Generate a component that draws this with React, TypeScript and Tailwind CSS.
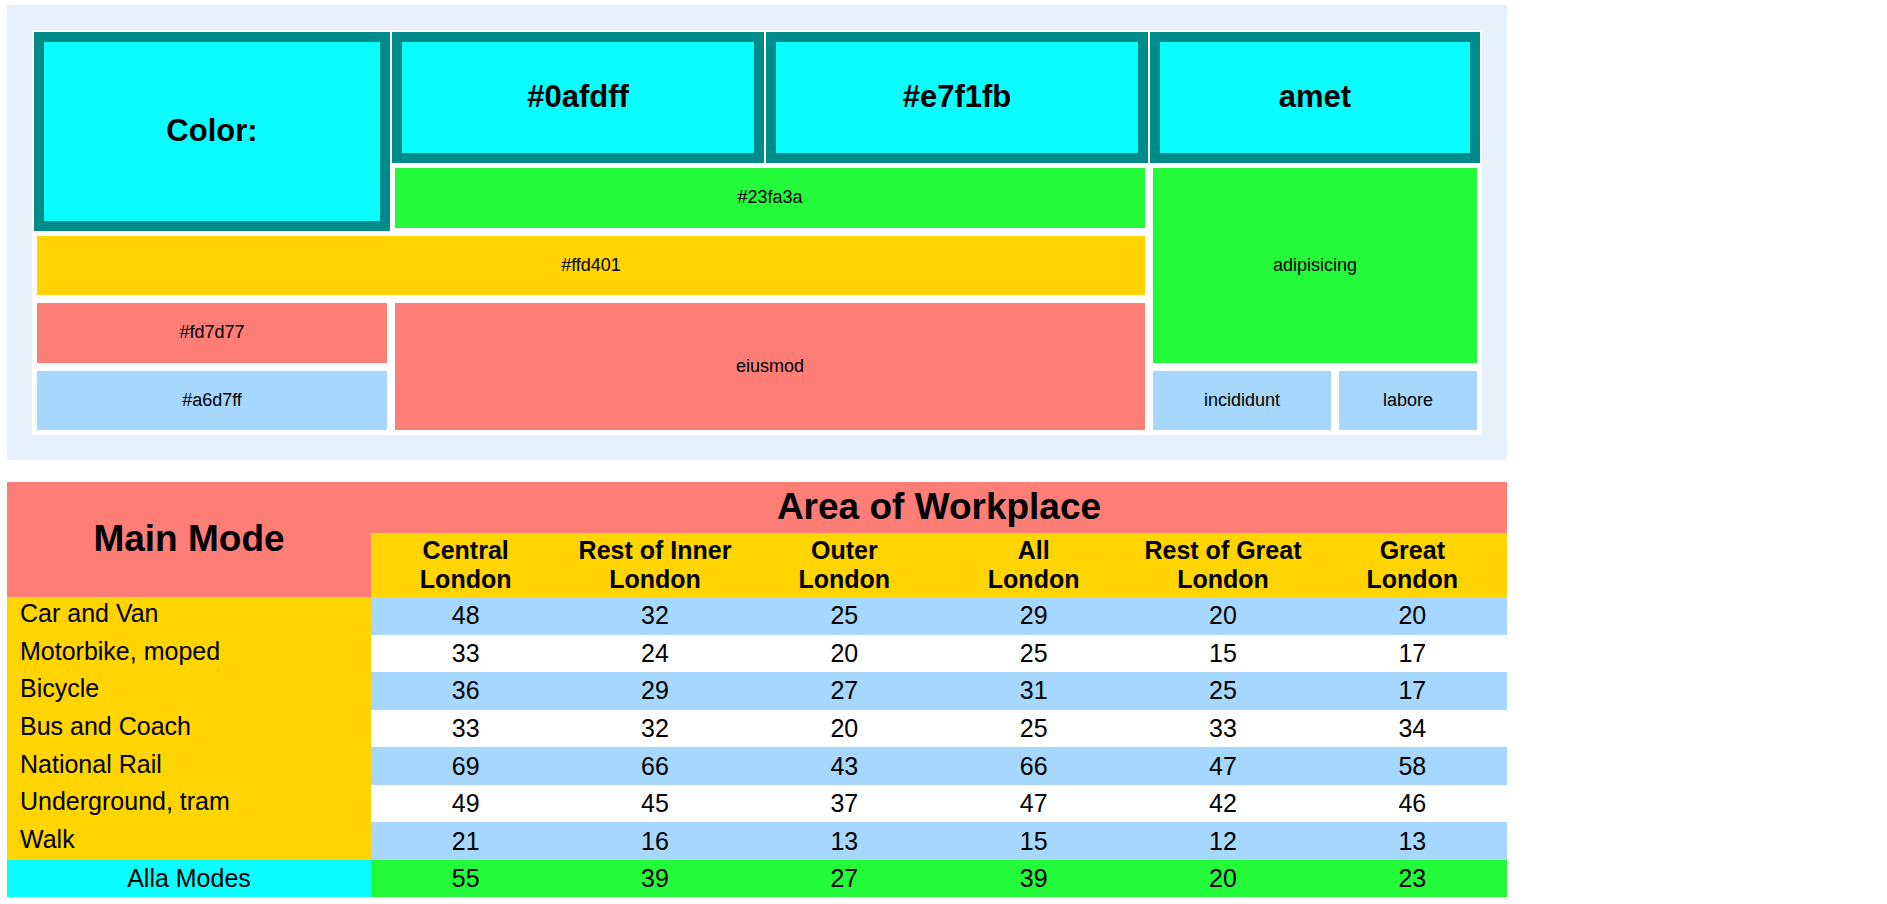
import React from "react";

const heading = "flex items-center justify-center border-[10px] border-[#008b8b] bg-[#0afdff] text-[31px] font-bold";
const cell = "m-[3px] flex items-center justify-center text-[18px]";

const rows = [
  { mode: "Car and Van", vals: [48, 32, 25, 29, 20, 20] },
  { mode: "Motorbike, moped", vals: [33, 24, 20, 25, 15, 17] },
  { mode: "Bicycle", vals: [36, 29, 27, 31, 25, 17] },
  { mode: "Bus and Coach", vals: [33, 32, 20, 25, 33, 34] },
  { mode: "National Rail", vals: [69, 66, 43, 66, 47, 58] },
  { mode: "Underground, tram", vals: [49, 45, 37, 47, 42, 46] },
  { mode: "Walk", vals: [21, 16, 13, 15, 12, 13] },
];

const totals = [55, 39, 27, 39, 20, 23];

const areas = [
  ["Central", "London"],
  ["Rest of Inner", "London"],
  ["Outer", "London"],
  ["All", "London"],
  ["Rest of Great", "London"],
  ["Great", "London"],
];

function ColorGrid() {
  return (
    <div className="w-[1500px] bg-[#e7f1fb] p-[25px]">
      <div className="bg-white p-[2px]">
        <div className="grid grid-cols-[356px_372px_382px_184px_144px] grid-rows-[131px_repeat(4,65.5px)] gap-[2px]">
          <div className={`${heading} col-start-1 row-start-1 row-span-2`}>Color:</div>
          <div className={`${heading} col-start-2 row-start-1`}>#0afdff</div>
          <div className={`${heading} col-start-3 row-start-1`}>#e7f1fb</div>
          <div className={`${heading} col-start-4 col-span-2 row-start-1`}>amet</div>

          <div className={`${cell} bg-[#23fa3a] col-start-2 col-span-2 row-start-2`}>#23fa3a</div>
          <div className={`${cell} bg-[#23fa3a] col-start-4 col-span-2 row-start-2 row-span-3`}>adipisicing</div>
          <div className={`${cell} bg-[#ffd401] col-start-1 col-span-3 row-start-3`}>#ffd401</div>
          <div className={`${cell} bg-[#fd7d77] col-start-1 row-start-4`}>#fd7d77</div>
          <div className={`${cell} bg-[#fd7d77] col-start-2 col-span-2 row-start-4 row-span-2`}>eiusmod</div>
          <div className={`${cell} bg-[#a6d7ff] col-start-1 row-start-5`}>#a6d7ff</div>
          <div className={`${cell} bg-[#a6d7ff] col-start-4 row-start-5`}>incididunt</div>
          <div className={`${cell} bg-[#a6d7ff] col-start-5 row-start-5`}>labore</div>
        </div>
      </div>
    </div>
  );
}

function ModeTable() {
  return (
    <table className="mt-[22px] w-[1500px] table-fixed border-collapse">
      <colgroup>
        <col className="w-[364px]" />
        {areas.map((a) => (
          <col key={a[0]} />
        ))}
      </colgroup>
      <thead>
        <tr>
          <th rowSpan={2} className="bg-[#fd7d77] p-0 text-center align-middle text-[37px] font-bold leading-[42.5px]">
            Main Mode
          </th>
          <th colSpan={6} className="bg-[#fd7d77] py-[4px] text-center text-[37px] font-bold leading-[42.5px]">
            Area of Workplace
          </th>
        </tr>
        <tr>
          {areas.map((a) => (
            <th key={a[0]} className="bg-[#ffd401] py-[3.5px] text-center text-[25px] font-bold leading-[28.75px]">
              {a[0]}
              <br />
              {a[1]}
            </th>
          ))}
        </tr>
      </thead>
      <tbody className="text-[25px] leading-[28.75px]">
        {rows.map((r, i) => (
          <tr key={r.mode}>
            <td className="bg-[#ffd401] pl-[13px] pt-[2.4px] pb-[6.4px] text-left">{r.mode}</td>
            {r.vals.map((v, j) => (
              <td key={j} className={`${i % 2 === 0 ? "bg-[#a6d7ff]" : "bg-white"} py-[4.4px] text-center`}>
                {v}
              </td>
            ))}
          </tr>
        ))}
        <tr>
          <td className="bg-[#0afdff] py-[4.4px] text-center">Alla Modes</td>
          {totals.map((v, j) => (
            <td key={j} className="bg-[#23fa3a] py-[4.4px] text-center">
              {v}
            </td>
          ))}
        </tr>
      </tbody>
    </table>
  );
}

export default function App() {
  return (
    <div className="min-h-screen bg-white pl-[7px] pt-[5px] font-['Liberation_Sans',Arial,sans-serif] text-black">
      <ColorGrid />
      <ModeTable />
    </div>
  );
}
